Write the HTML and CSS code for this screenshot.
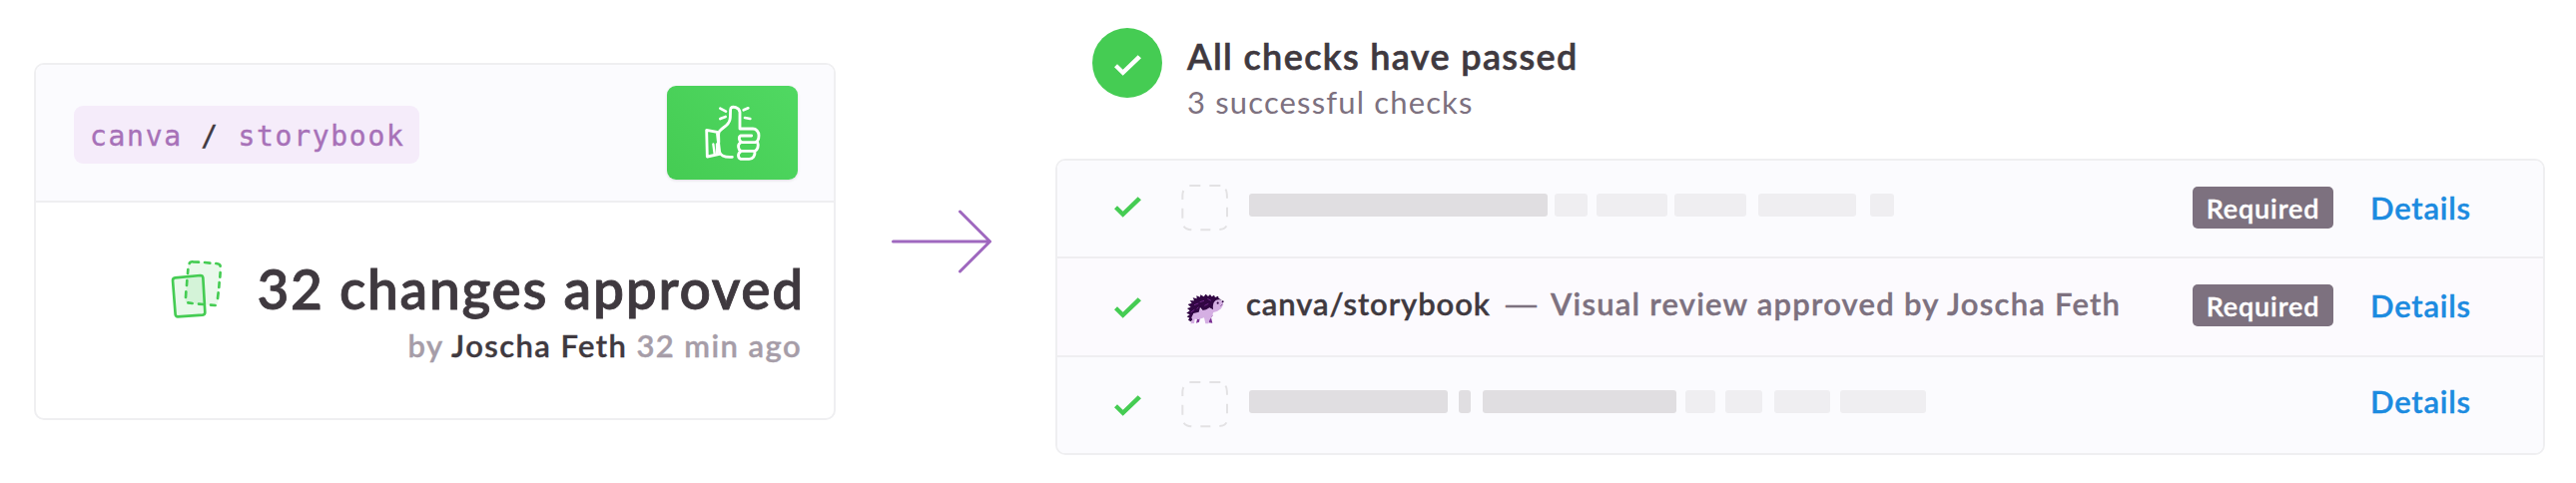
FILE: index.html
```html
<!DOCTYPE html>
<html lang="en">
<head>
<meta charset="utf-8">
<title>Visual review status</title>
<link rel="stylesheet" href="styles.css">
</head>
<body>
<svg class="defs" width="0" height="0" aria-hidden="true">
  <symbol id="check" viewBox="0 0 81 62"><path d="M0 36L9 27L26 44L71 0L81 9L26 62Z"/></symbol>
  <symbol id="slot" viewBox="398 102 144 144"><path fill="none" stroke="#e3e2e4" stroke-width="6" d="M423 108H456M483 108H516M531 119Q536 124 536 146M536 173V202M534 229Q529 239 513 240M486 241H456M429 241Q411 239 406 230M402 206V176M402 150V138Q402 130 405 123"/></symbol>
</svg>
<main class="page">
  <section class="card">
    <header class="card-head">
      <div class="repo">canva <span class="slash">/</span> storybook</div>
      <div class="thumb">
        <svg viewBox="190 130 180 180" width="60" height="60" fill="none" stroke="#fff" stroke-width="8.5" stroke-linecap="round" stroke-linejoin="round">
          <path d="M240 215C250 202 267 200 271 181C274 169 271 152 274 146C280 140 298 143 301 158V208H340C350 208 358 217 358 228C358 238 354 247 347 249H308C299 247 296 233 303 229H336"/>
          <path d="M303 250C293 255 296 271 304 275H346C355 272 358 258 354 249M304 276C294 281 294 296 304 299H329C341 299 347 289 346 277"/>
          <path d="M233 219L240 284L203 292L201 212L233 218M238 219C235 226 239 241 237 252L240 278C244 292 262 294 278 293"/>
          <path stroke-width="7" d="M221 254L225 284M232 254V281"/>
          <path stroke-width="8" d="M242 147L259 156M242 178L258 172M312 152L326 146M316 175L332 178"/>
        </svg>
      </div>
    </header>
    <div class="card-body">
      <div class="title-row">
        <svg class="diff" viewBox="55 55 170 190" width="56.67" height="63.33" stroke="#45cc53" stroke-width="8">
          <path fill="#e9f9eb" stroke="none" d="M121 67L205 74Q213 76 212 83L202 192Q200 199 193 199L112 192Q104 190 105 183L113 75Q115 67 121 67Z"/>
          <path fill="#45cc53" fill-opacity=".12" stroke-linejoin="round" d="M74 116L150 109Q157 109 158 116L164 220Q164 227 157 228L82 233Q76 233 75 227L67 124Q67 117 74 116Z"/>
          <path fill="none" stroke-linecap="round" d="M117 73Q119 67 128 68L145 69M163 70L179 72M197 73Q210 74 210 81M210 100L209 114M207 130L206 145M204 161L202 178M195 199L181 198M159 196L145 195M126 193L113 191M106 175L107 158M109 139L110 124M112 103L113 91"/>
        </svg>
        <h1 class="title">32 changes approved</h1>
      </div>
      <p class="byline">by <span class="who">Joscha Feth</span> 32 min ago</p>
    </div>
  </section>

  <svg class="arrow" viewBox="0 0 106 76" width="106" height="76" fill="none" stroke="#9f68bf" stroke-width="3" stroke-linecap="round" stroke-linejoin="round"><path d="M4.500 37H101.500M71.500 7L101.500 37L71.500 67"/></svg>

  <section class="checks">
    <header class="summary">
      <span class="badge"><svg width="27" height="21"><use href="#check"/></svg></span>
      <div>
        <h2 class="summary-title">All checks have passed</h2>
        <p class="summary-sub">3 successful checks</p>
      </div>
    </header>
    <div class="list">
      <div class="row">
        <svg class="tick" width="27" height="21"><use href="#check"/></svg>
        <svg class="slot" width="48" height="48"><use href="#slot"/></svg>
        <div class="bars">
          <i class="bar dark" style="width:299px"></i><i class="bar" style="width:33px;margin-left:7px"></i><i class="bar" style="width:71px;margin-left:9px"></i><i class="bar" style="width:72px;margin-left:7px"></i><i class="bar" style="width:98px;margin-left:12px"></i><i class="bar" style="width:24px;margin-left:14px"></i>
        </div>
        <span class="required">Required</span>
        <a class="details">Details</a>
      </div>
      <div class="row current">
        <svg class="tick" width="27" height="21"><use href="#check"/></svg>
        <svg class="hedgehog" viewBox="410 430 120 100" width="40" height="33.33">
          <path fill="#7b2f94" d="M438 502L456 498L452 519L443 522L446 511ZM474 500L494 498L488 506L492 522L481 521L479 508Z"/>
          <path fill="#d5afe3" d="M452 477L463 484L480 474L491 480L494 455L507 451L522 456L525 466L518 479L506 487L495 490Q492 498 489 505L483 514L480 524L471 524L467 506L451 511L439 510L437 523L426 524L431 512L427 497Z"/>
          <path fill="#310643" d="M427 518L419 513L423 507L415 503L424 497L414 492L424 485L416 478L427 474L418 466L430 462L424 455L437 455L433 446L445 449L444 440L455 444L456 437L466 443L472 435L479 442L485 436L490 443L497 438L500 445L509 441L511 448L521 453L511 452Q499 453 495 463Q492 474 494 482L483 476L473 482L463 484L455 475L451 489L435 493L429 506L432 512Z"/>
          <path fill="none" stroke="#7b2f94" stroke-width="2.500" d="M427 490L438 482M437 468L450 463M454 459L467 455M468 470L480 464M477 449L488 455M445 480L450 474"/>
          <circle cx="508" cy="462" r="3.200" fill="#310643"/><circle cx="523" cy="458" r="3" fill="#310643"/>
          <path fill="none" stroke="#310643" stroke-width="1.500" d="M522 466L516 471"/>
        </svg>
        <div class="status"><span class="name">canva/storybook</span><span class="dash">—</span><span class="desc">Visual review approved by Joscha Feth</span></div>
        <span class="required">Required</span>
        <a class="details">Details</a>
      </div>
      <div class="row last">
        <svg class="tick" width="27" height="21"><use href="#check"/></svg>
        <svg class="slot" width="48" height="48"><use href="#slot"/></svg>
        <div class="bars">
          <i class="bar dark" style="width:199px"></i><i class="bar dark" style="width:12px;margin-left:11px"></i><i class="bar dark" style="width:194px;margin-left:12px"></i><i class="bar" style="width:30px;margin-left:9px"></i><i class="bar" style="width:37px;margin-left:10px"></i><i class="bar" style="width:56px;margin-left:12px"></i><i class="bar" style="width:86px;margin-left:10px"></i>
        </div>
        <a class="details">Details</a>
      </div>
    </div>
  </section>
</main>
</body>
</html>
```

FILE: styles.css
```css
* { box-sizing: border-box; }
body {
  margin: 0;
  background: #fff;
  color: #3f393f;
  font-family: Lato, "Liberation Sans", sans-serif;
  font-weight: 600;
  -webkit-text-stroke: .4px currentColor;
}
h1, h2, p { margin: 0; font-weight: 600; }
svg { display: block; flex: none; }
.defs { position: absolute; }
.page { display: flex; align-items: flex-start; width: 2580px; height: 484px; overflow: hidden; }

/* Review card */
.card {
  flex: none;
  width: 803px;
  height: 358px;
  margin: 63px 0 0 34px;
  border: 2px solid #efeff1;
  border-radius: 10px;
  overflow: hidden;
}
.card-head {
  display: flex;
  justify-content: space-between;
  align-items: flex-start;
  height: 138px;
  padding: 21px 36px 0 38px;
  background: #fbfbfe;
  border-bottom: 2px solid #efeff1;
}
.repo {
  width: 346px;
  height: 58px;
  margin-top: 20px;
  padding: 4px 0 0 16px;
  border-radius: 9px;
  background: #f5ecfa;
  color: #a771b8;
  font: 400 28px/53px "DejaVu Sans Mono", monospace;
  letter-spacing: 1.7px;
  white-space: pre;
}
.slash { color: #3f393f; }
.thumb {
  display: grid;
  place-items: center;
  width: 131px;
  height: 94px;
  border-radius: 9px;
  background: linear-gradient(45deg, #45cc53, #50d862);
  box-shadow: 0 1px 3px rgba(0, 0, 0, .12);
}
.card-body { padding: 55px 29px 0 0; }
.title-row { display: flex; justify-content: flex-end; align-items: flex-start; gap: 32px; }
.title {
  margin-top: 4px;
  font-size: 55px;
  line-height: 55px;
  letter-spacing: 1.7px;
  white-space: nowrap;
  -webkit-text-stroke-width: .8px;
}
.byline {
  margin-top: 10px;
  padding-right: 3px;
  font-size: 31px;
  line-height: 31px;
  letter-spacing: 1.41px;
  color: #a69da8;
  text-align: right;
}
.who { color: #3f393f; -webkit-text-stroke-color: #3f393f; }
.arrow { margin: 205px 0 0 53px; }

/* Checks */
.checks { flex: none; width: 1492px; margin: 28px 0 0 61px; }
.summary { display: flex; gap: 25px; height: 131px; padding-left: 37px; }
.badge {
  display: grid;
  place-items: center;
  width: 70px;
  height: 70px;
  padding-top: 4px;
  border-radius: 50%;
  background: #45cc53;
  fill: #fff;
}
.summary-title {
  margin-top: 10px;
  font-size: 36px;
  line-height: 36px;
  letter-spacing: 1.35px;
  -webkit-text-stroke-width: .6px;
}
.summary-sub {
  margin-top: 13px;
  font-size: 31px;
  line-height: 31px;
  letter-spacing: 1.15px;
  font-weight: 400;
  color: #7d717f;
  -webkit-text-stroke-width: 0;
}
.list {
  height: 297px;
  border: 2px solid #efeff1;
  border-radius: 10px;
  overflow: hidden;
}
.row {
  display: flex;
  align-items: flex-start;
  height: 98px;
  padding-left: 57px;
  background: #fbfbfe;
  border-bottom: 2px solid #efeef1;
}
.current { height: 99px; background: #fcfafe; }
.last { height: 96px; border-bottom: 0; }
.tick { margin-top: 36px; fill: #45cc53; }
.current .tick { margin-top: 39px; }
.last .tick { margin-top: 38px; }
.slot { margin: 23px 0 0 40px; }
.bars { display: flex; width: 943px; margin: 33px 0 0 20px; }
.bar { height: 23px; border-radius: 3px; background: #efeef1; }
.dark { background: #e0dee1; }
.hedgehog { margin: 34px 0 0 44px; }
.status {
  display: flex;
  width: 946px;
  margin: 30px 0 0 21px;
  font-size: 31px;
  line-height: 31px;
  white-space: nowrap;
}
.name { width: 260px; letter-spacing: .92px; }
.dash { width: 45px; font-family: "Liberation Sans", sans-serif; font-weight: 400; color: #7d717f; }
.desc { letter-spacing: 1.23px; color: #7d717f; }
.required {
  flex: none;
  width: 141px;
  height: 42px;
  margin: 26px 0 0 2px;
  border-radius: 5px;
  background: #7d717f;
  color: #fff;
  font-size: 27px;
  line-height: 43px;
  letter-spacing: .85px;
  text-align: center;
}
.dash, .desc, .required, .details, .byline, .repo, .slash { -webkit-text-stroke-color: currentColor; }
.details { margin: 32px 0 0 37px; font-size: 31px; line-height: 31px; letter-spacing: .8px; color: #1c8be0; }
.last .details { margin: 29px 0 0 180px; }
```
